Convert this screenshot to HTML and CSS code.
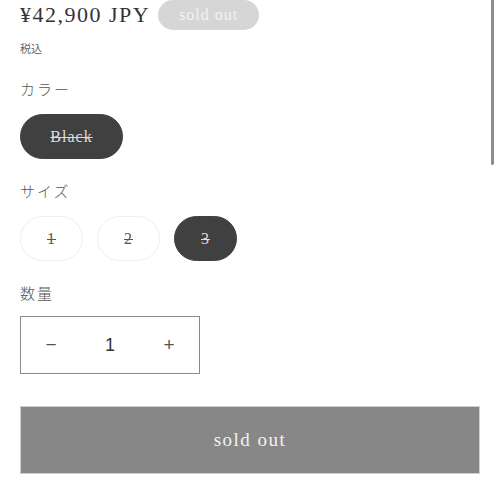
FILE: index.html
```html
<!DOCTYPE html>
<html lang="ja">
<head>
    <meta charset="UTF-8">
    <meta name="viewport" content="width=device-width, initial-scale=1.0">
    <title>Product</title>
    <link rel="stylesheet" href="styles.css">
</head>
<body>
    <div class="product-info">
        <div class="price-row">
            <span class="price">¥42,900 JPY</span>
            <span class="badge">sold out</span>
        </div>
        <div class="tax-note">税込</div>

        <div class="option">
            <div class="option-label">カラー</div>
            <div class="pills">
                <span class="pill pill-selected pill-wide">Black</span>
            </div>
        </div>

        <div class="option">
            <div class="option-label">サイズ</div>
            <div class="pills">
                <span class="pill">1</span>
                <span class="pill">2</span>
                <span class="pill pill-selected">3</span>
            </div>
        </div>

        <div class="option">
            <div class="option-label">数量</div>
            <div class="quantity">
                <button class="qty-button">&minus;</button>
                <span class="qty-value">1</span>
                <button class="qty-button">+</button>
            </div>
        </div>

        <button class="sold-out-button" disabled>sold out</button>
    </div>
    <div class="scroll-thumb"></div>
</body>
</html>
```

FILE: styles.css
```css
body {
    margin: 0;
    padding: 0 20px;
    background-color: #ffffff;
    color: #333;
    font-family: "Liberation Serif", "Noto Sans CJK JP", serif;
    overflow: hidden;
}
.product-info {
    width: 460px;
}
.price-row {
    display: flex;
    align-items: center;
    gap: 8px;
    height: 30px;
}
.price {
    font-size: 22px;
    letter-spacing: 1.5px;
    color: #333;
}
.badge {
    display: inline-flex;
    align-items: center;
    justify-content: center;
    width: 101px;
    height: 30px;
    border-radius: 15px;
    background-color: #d6d6d6;
    color: #f2f2f2;
    font-size: 16px;
    letter-spacing: 1px;
}
.tax-note {
    margin-top: 10px;
    font-family: "Noto Sans CJK JP", sans-serif;
    font-size: 11px;
    line-height: 16px;
    color: #666;
}
.option {
    margin-top: 23px;
}
.option-label {
    font-family: "Noto Sans CJK JP", sans-serif;
    font-size: 15px;
    line-height: 20px;
    letter-spacing: 2px;
    color: #555;
    font-weight: 300;
}
.pills {
    display: flex;
    gap: 14px;
    margin-top: 15px;
}
.pill {
    display: inline-flex;
    align-items: center;
    justify-content: center;
    width: 61px;
    height: 43px;
    border: 1px solid #eeeeee;
    border-radius: 23px;
    font-size: 16px;
    color: #555;
    text-decoration: line-through;
    letter-spacing: 1px;
}
.pill-wide {
    width: 101px;
}
.pill-selected {
    background-color: #404040;
    border-color: #404040;
    color: #dcdcdc;
}
.option + .option {
    margin-top: 22px;
}
.quantity {
    display: flex;
    align-items: center;
    justify-content: space-between;
    width: 178px;
    height: 56px;
    margin-top: 13px;
    border: 1px solid #8a8a8a;
    font-family: "Liberation Sans", sans-serif;
}
.qty-button {
    width: 60px;
    height: 100%;
    border: none;
    background: none;
    font-family: "Liberation Sans", sans-serif;
    font-size: 19px;
    color: #555;
    padding: 0;
}
.qty-value {
    font-size: 18px;
    color: #333;
}
.sold-out-button {
    display: block;
    width: 460px;
    height: 68px;
    margin-top: 32px;
    border: 1px solid #cfcfcf;
    background-color: #878787;
    color: #f2f2f2;
    font-family: "Liberation Serif", serif;
    font-size: 19px;
    letter-spacing: 1.5px;
}
.scroll-thumb {
    position: absolute;
    top: 0;
    left: 491px;
    width: 3px;
    height: 165px;
    background-color: #8c8c8c;
    border-radius: 0 0 2px 2px;
}
```
